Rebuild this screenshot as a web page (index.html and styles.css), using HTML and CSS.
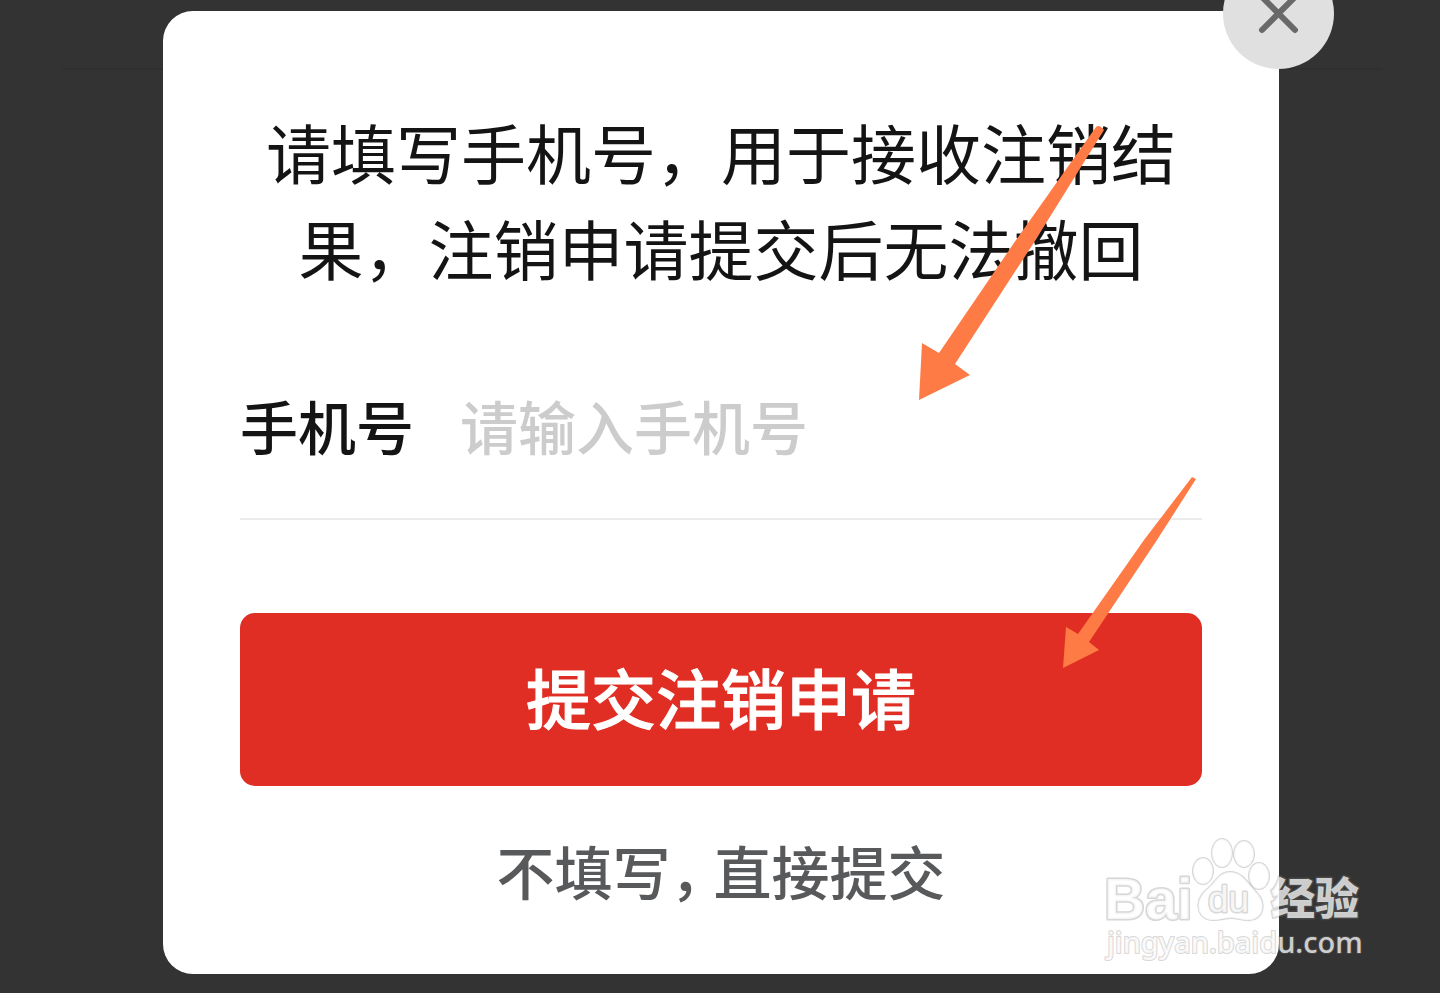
FILE: index.html
```html
<!DOCTYPE html>
<html lang="zh-CN">
<head>
<meta charset="utf-8">
<meta name="viewport" content="width=device-width, initial-scale=1">
<title>注销申请</title>
<link rel="stylesheet" href="styles.css">
</head>
<body>
<main class="stage">
  <hr class="backdrop-rule">
  <form class="dialog" onsubmit="return false">
    <button class="close" type="button" aria-label="关闭">
      <svg class="close-icon" viewBox="0 0 44 44" aria-hidden="true"><path d="M5 5 38 38M38 5 5 38"/></svg>
    </button>
    <h1 class="title">请填写手机号，用于接收注销结果，注销申请提交后无法撤回</h1>
    <div class="field">
      <label class="label" for="phone">手机号</label>
      <input class="input" id="phone" type="tel" placeholder="请输入手机号">
    </div>
    <button class="submit" type="submit">提交注销申请</button>
    <button class="skip" type="button">不填写<span class="comma">，</span>直接提交</button>
  </form>
  <svg class="arrows" viewBox="0 0 300 560" aria-hidden="true">
    <path d="M196 17Q199 14 204 20L133 134 55 254 70 265 19 290 22 233 39 243 116 130Z"/>
    <path d="M292 367 296 369 257 430 189 532 199 540 163 558 166 517 178 524 244 430Z"/>
  </svg>
  <svg class="watermark" viewBox="0 0 290 168" role="img" aria-label="百度经验">
    <text class="wm-brand" x="14" y="94">Bai</text>
    <g class="wm-paw">
      <ellipse cx="113" cy="46" rx="10" ry="13"/>
      <ellipse cx="132" cy="28" rx="10" ry="14"/>
      <ellipse cx="154" cy="29" rx="10" ry="13"/>
      <ellipse cx="169" cy="51" rx="10" ry="13"/>
      <path d="M140 47C128 47 125 59 116 65C102 78 109 96 123 95C131 95 135 93 141 93C148 93 153 96 160 95C173 94 177 79 167 68C158 59 153 47 140 47Z"/>
    </g>
    <text class="wm-du" x="118" y="87">du</text>
    <text class="wm-cn" x="181" y="90">经验</text>
    <text class="wm-url" x="17" y="128">jingyan.baidu.com</text>
  </svg>
</main>
</body>
</html>
```
FILE: styles.css
```css
* {
  box-sizing: border-box;
}

body {
  margin: 0;
  background: #333;
  font-family: "Noto Sans CJK SC", sans-serif;
  color: #141414;
}

.stage {
  position: relative;
  min-height: 100vh;
  padding: 11px 161px 19px 163px;
  overflow: hidden;
}

.backdrop-rule {
  position: absolute;
  top: 68px;
  left: 62px;
  right: 58px;
  height: 2px;
  margin: 0;
  border: 0;
  background: #2f2f2f;
}

.dialog {
  position: relative;
  display: flex;
  flex-direction: column;
  padding: 92px 77px 57px;
  border-radius: 30px;
  background: #fff;
}

button,
input {
  border: 0;
  padding: 0;
  background: none;
  font-family: inherit;
}

.close {
  position: absolute;
  top: -53px;
  right: -55px;
  display: grid;
  place-items: center;
  width: 111px;
  height: 111px;
  border-radius: 50%;
  background: #e0e0e0;
}

.close-icon {
  width: 44px;
  height: 44px;
  fill: none;
  stroke: #696969;
  stroke-width: 6;
  stroke-linecap: round;
}

.title {
  margin: 0;
  font-size: 65px;
  line-height: 96px;
  font-weight: 400;
  text-align: center;
}

.field {
  display: flex;
  align-items: center;
  gap: 46px;
  height: 185px;
  margin-top: 40px;
  padding-bottom: 4px;
  border-bottom: 2px solid #ebebeb;
}

.label,
.input {
  font-size: 58px;
  line-height: 84px;
  font-weight: 500;
}

.input {
  flex: 1;
  min-width: 0;
  color: #141414;
}

.input::placeholder {
  color: #ccc;
  opacity: 1;
}

.submit {
  height: 173px;
  margin-top: 93px;
  padding-bottom: 8px;
  border-radius: 15px;
  background: #e02e24;
  color: #fff;
  font-size: 65px;
  font-weight: 500;
  -webkit-text-stroke: 1px currentColor;
}

.skip {
  align-self: center;
  margin-top: 37px;
  color: #58595b;
  font-size: 58px;
  line-height: 94px;
  font-weight: 500;
}

.comma {
  margin-right: 14px;
  font-feature-settings: "halt";
}

.arrows {
  position: absolute;
  top: 110px;
  right: 240px;
  width: 300px;
  height: 560px;
  fill: #ff7b45;
  pointer-events: none;
}

.watermark {
  position: absolute;
  right: 60px;
  bottom: 0;
  width: 290px;
  height: 168px;
  fill: rgba(255, 255, 255, 0.75);
  stroke: rgba(120, 120, 120, 0.3);
  stroke-width: 3;
  stroke-linejoin: round;
  paint-order: stroke;
  pointer-events: none;
}

.wm-brand {
  font: 700 57px "Liberation Sans", sans-serif;
}

.wm-paw {
  stroke-width: 2;
}

.wm-du {
  font: 400 37px "Liberation Sans", sans-serif;
}

.wm-cn {
  font: 900 44px "Noto Sans CJK SC", sans-serif;
}

.wm-url {
  font: 500 29px "Noto Sans", sans-serif;
  stroke-width: 2;
}
```
